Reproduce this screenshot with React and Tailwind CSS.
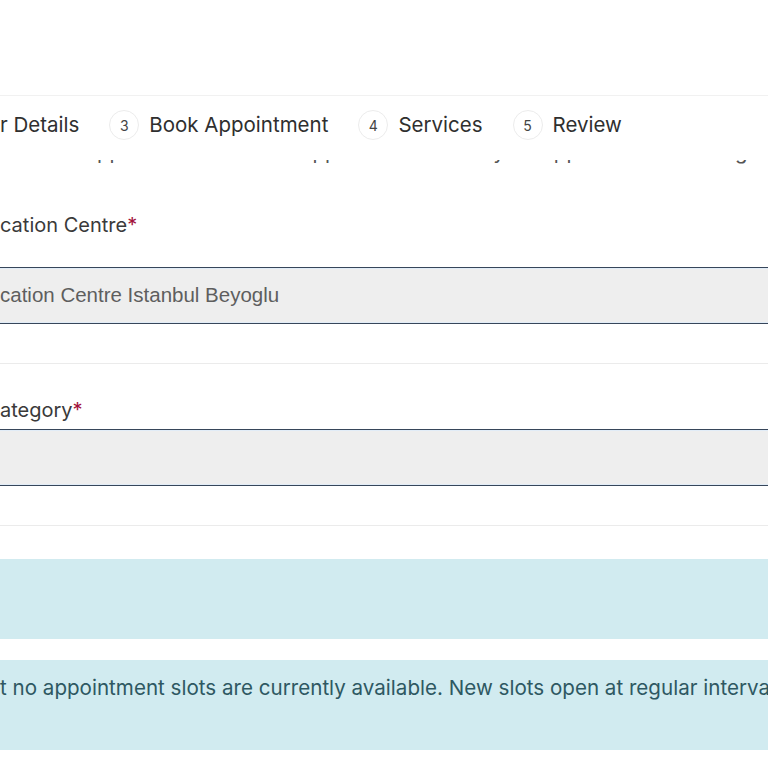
import React from "react";

const steps = [
  { n: null, label: "r Details" },
  { n: 3, label: "Book Appointment" },
  { n: 4, label: "Services" },
  { n: 5, label: "Review" },
];

const StepBadge = ({ n }) => (
  <span className="flex h-[30px] w-[30px] shrink-0 items-center justify-center rounded-full border border-[#ececec] text-[14px] text-[#444]">
    {n}
  </span>
);

const Label = ({ children }) => (
  <div className="whitespace-nowrap text-[20px] leading-[28px] text-[#3a3a3a]">
    {children}
    <span className="text-[#a3123a]">*</span>
  </div>
);

const Field = ({ value }) => (
  <div className="flex h-[57px] w-full items-center border-y border-[#37465a] bg-[#eeeeee] shadow-[inset_0_1px_0_#e1ecf7,inset_0_-1px_0_#e1ecf7]">
    <span className="whitespace-nowrap font-['Liberation_Sans',Arial,sans-serif] text-[20.5px] text-[#5e5e5e]">
      {value}
    </span>
  </div>
);

export default function App() {
  return (
    <div className="min-h-[768px] w-[768px] overflow-hidden bg-white font-['Inter',sans-serif]">
      <div className="h-[96px] border-b border-[#f1f1f1]" />

      {/* step indicator */}
      <div className="flex h-[64px] items-start gap-[30px] pt-[14px]">
        {steps.map((s) => (
          <div key={s.label} className="flex h-[30px] items-center gap-[10px]">
            {s.n && <StepBadge n={s.n} />}
            <span className="whitespace-nowrap text-[20.5px] text-[#2f2f2f]">
              {s.label}
            </span>
          </div>
        ))}
      </div>

      {/* intro copy scrolled under the sticky header */}
      <div className="h-[10px] overflow-hidden">
        <p className="-ml-[15px] -mt-[18px] whitespace-nowrap text-[20.5px] leading-[20px] text-[#555]">
          select the appointment to select appointment slot to your appointment booking
        </p>
      </div>

      <div className="border-b border-[#ebebeb] pb-[39px] pt-[41px]">
        <Label>cation Centre</Label>
        <div className="mt-[28px]">
          <Field value="cation Centre Istanbul Beyoglu" />
        </div>
      </div>

      <div className="border-b border-[#ebebeb] pb-[39px] pt-[32px]">
        <Label>ategory</Label>
        <div className="mt-[5px]">
          <Field value="" />
        </div>
      </div>

      <div className="mt-[33px] h-[80px] bg-[#d1ebf0]" />

      <div className="mt-[21px] h-[90px] bg-[#d1ebf0] pt-[14px]">
        <p className="whitespace-nowrap text-[20.6px] leading-[28px] text-[#2e5862]">
          t no appointment slots are currently available. New slots open at regular intervals.
        </p>
      </div>
    </div>
  );
}
